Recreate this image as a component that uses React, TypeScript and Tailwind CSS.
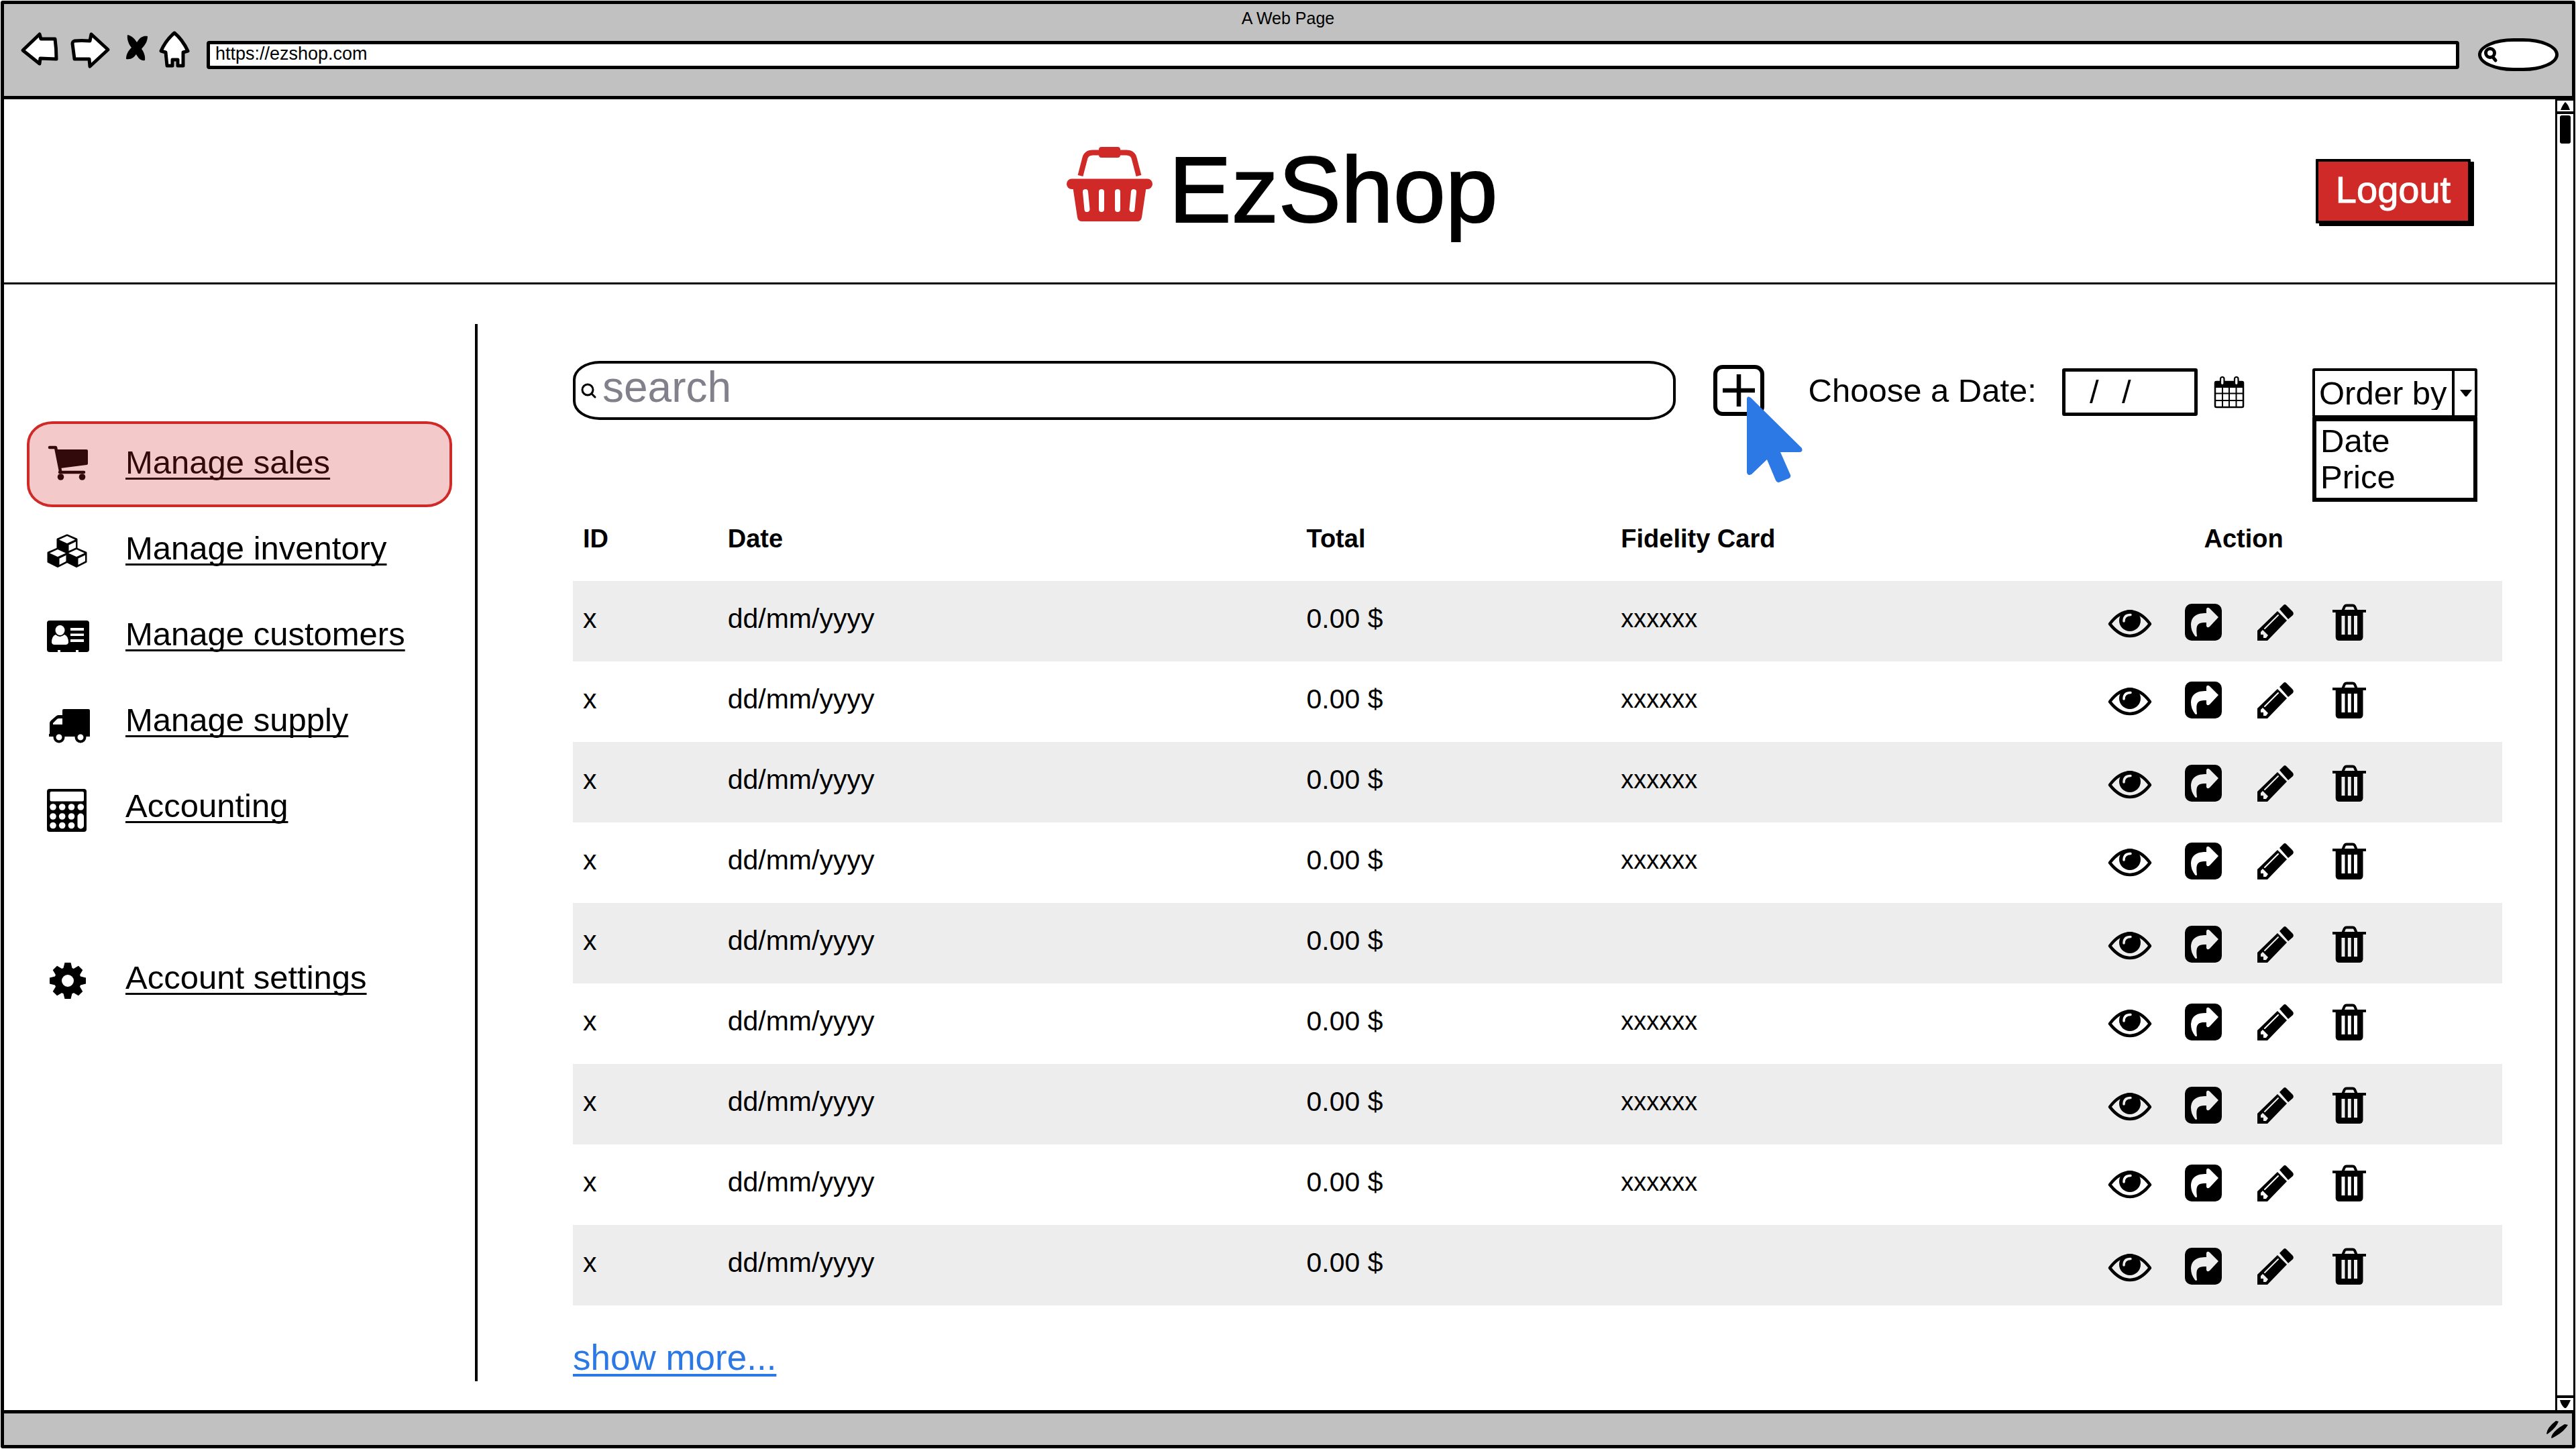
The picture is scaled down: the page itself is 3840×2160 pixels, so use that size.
import type { ReactNode } from "react";

const svgBase = "block overflow-visible";

/* ---------- browser chrome ---------- */

function BackIcon() {
  return (
    <svg className={svgBase} width="62" height="58" viewBox="0 0 62 58" fill="white" stroke="black" strokeWidth="5" strokeLinejoin="round">
      <path d="M5 29L30 5L32 12L53 12Q55 26 55 42L31 41L30 49Z" />
    </svg>
  );
}

function ForwardIcon() {
  return (
    <svg className={svgBase} width="64" height="58" viewBox="0 0 64 58" fill="white" stroke="black" strokeWidth="5" strokeLinejoin="round">
      <path d="M8 15Q18 14 31 15L33 5L58 28L31 53L30 42L8 42Q7 34 5 19Q5 16 8 15Z" />
    </svg>
  );
}

function StopIcon() {
  return (
    <svg className={svgBase} width="46" height="58" viewBox="0 0 46 58">
      <path d="M11 6C17 7 22 12 25 17C30 9 35 7 41 8C41 17 36 22 32 27C35 31 38 37 37 44C30 45 27 40 24 35C20 40 17 43 9 42C9 34 13 29 17 25C13 20 10 13 11 6Z" />
    </svg>
  );
}

function HomeIcon() {
  return (
    <svg className={svgBase} width="46" height="58" viewBox="0 0 46 58" fill="white" stroke="black" strokeWidth="5" strokeLinejoin="round">
      <path d="M23 3Q35 13 43 30L36 32V52H28V43H20V52H12L10 32L3 30Q10 14 23 3Z" />
    </svg>
  );
}

function BrowserBar() {
  return (
    <header className="border-b-[5px] border-black bg-[#c1c1c1] pt-[9px] pb-[37px]">
      <p className="text-center text-[25px] leading-6">A Web Page</p>
      <div className="mt-[7px] flex h-[60px] items-end pr-5 pl-[23px]">
        <nav aria-label="Browser" className="flex gap-3 self-start">
          <button type="button" aria-label="Back"><BackIcon /></button>
          <button type="button" aria-label="Forward"><ForwardIcon /></button>
          <button type="button" aria-label="Stop"><StopIcon /></button>
          <button type="button" aria-label="Home"><HomeIcon /></button>
        </nav>
        <input
          aria-label="Address"
          defaultValue="https://ezshop.com"
          className="mb-[3px] ml-[25px] h-[42px] min-w-0 flex-1 rounded-[4px] border-[5px] border-black bg-white pb-1 pl-2 text-[27px] leading-7 outline-none"
        />
        <div className="ml-7 flex h-[49px] w-[120px] items-center rounded-[44%/50%] border-[5px] border-black bg-white pl-1">
          <svg className={svgBase} width="20" height="24" viewBox="0 0 20 24" fill="none" stroke="black" strokeWidth="5" strokeLinecap="round">
            <circle cx="9" cy="9" r="6.5" />
            <path d="M13 15L17 20" />
          </svg>
          <input aria-label="Web search" className="w-full min-w-0 bg-transparent outline-none" />
        </div>
      </div>
    </header>
  );
}

function ScrollBar() {
  return (
    <div className="z-10 -mr-[5px] flex w-[30px] shrink-0 flex-col items-center border-x-[3px] border-black bg-white">
      <button type="button" aria-label="Scroll up" className="flex h-[22px] w-full items-center justify-center border-t-2 border-b-[4px] border-black">
        <svg width="16" height="12" viewBox="0 0 16 12"><path d="M1 12Q4 4 8 0Q12 3 15 12Z" /></svg>
      </button>
      <div className="mt-[2px] h-[42px] w-4 rounded-[3px] bg-black" />
      <div className="flex-1" />
      <button type="button" aria-label="Scroll down" className="flex h-[22px] w-full items-center justify-center border-t-[4px] border-black">
        <svg width="16" height="12" viewBox="0 0 16 12"><path d="M0 0H16Q12 9 9 12H7Q2 8 0 0Z" /></svg>
      </button>
    </div>
  );
}

function StatusBar() {
  return (
    <footer className="flex h-[52px] items-center justify-end border-t-[5px] border-black bg-[#c1c1c1] pr-[5px]">
      <svg className={svgBase} width="34" height="28" viewBox="0 0 34 28">
        <path d="M1 20Q2 11 15 1L19 2Q15 12 2 21Z" />
        <path d="M8 26Q9 17 28 6L33 7Q27 18 9 27Z" />
      </svg>
    </footer>
  );
}

/* ---------- page header ---------- */

function BasketLogo() {
  return (
    <svg className={svgBase} width="128" height="112" viewBox="0 0 128 112" fill="#d02a28">
      <path d="M20.5 43L27 18Q29 8.500 39 8.500H89Q99 8.500 101 18L107.500 43" fill="none" stroke="#d02a28" strokeWidth="8" />
      <rect x="48" y="0" width="32" height="16" rx="4" />
      <rect x="0" y="47.500" width="128" height="15.500" rx="7.500" />
      <path d="M9 58H119L112 105Q111 111 105 111H23Q17 111 16 105Z" />
      <path d="M28 67L30.500 93M52 67V93M76 67V93M100 67L97.500 93" stroke="white" strokeWidth="8" strokeLinecap="round" />
    </svg>
  );
}

function PageHeader() {
  return (
    <div className="grid h-[276px] grid-cols-[1fr_auto_1fr] items-center border-b-[3px] border-black">
      <h1 className="col-start-2 flex items-center gap-6 pb-1 pl-2">
        <span className="pb-4"><BasketLogo /></span>
        <span className="text-[140px] leading-none [-webkit-text-stroke:2px_black]">EzShop</span>
      </h1>
      <button
        type="button"
        className="mr-[126px] h-24 w-[231px] justify-self-end rounded-[1px] border-[4px] border-black bg-[#d02a28] pb-1 text-[56px] leading-none text-white shadow-[5px_4px_0_0_black] [-webkit-text-stroke:1px_white]"
      >
        Logout
      </button>
    </div>
  );
}

/* ---------- sidebar ---------- */

function NavGlyph({ children }: { children: ReactNode }) {
  return (
    <svg className="block shrink-0 overflow-visible" width="64" height="64" viewBox="0 0 64 64" fill="currentColor">
      {children}
    </svg>
  );
}

function CartIcon() {
  return (
    <NavGlyph>
      <path d="M5 7H14L21 42" fill="none" stroke="currentColor" strokeWidth="4.500" strokeLinecap="round" strokeLinejoin="round" />
      <path d="M13 10H60Q62 10 62 12V31Q62 33 60 33L21 38Z" />
      <path d="M20 44H56" stroke="currentColor" strokeWidth="4.500" strokeLinecap="round" />
      <circle cx="21.500" cy="51" r="4.800" />
      <circle cx="53.500" cy="51" r="4.800" />
    </NavGlyph>
  );
}

function CubesIcon() {
  return (
    <NavGlyph>
      {["translate(31 10)", "translate(17 30)", "translate(45 30)"].map((t) => (
        <g key={t} transform={t}>
          <path d="M0 0L14 6V19.500L0 26.500L-14 19.500V6Z" stroke="currentColor" strokeWidth="3" strokeLinejoin="round" />
          <path d="M0 1L12 6.500L0 12L-12 6.500Z" fill="white" />
          <path d="M2.500 14.500L13 9.500V18.500L2.500 24Z" fill="white" />
        </g>
      ))}
    </NavGlyph>
  );
}

function IdCardIcon() {
  return (
    <NavGlyph>
      <rect x="1" y="9" width="63" height="47" rx="4" />
      <g fill="white">
        <path d="M8 42Q8 32 14 30Q20 36 27 30Q33 32 33 42Q32 45 29 45H12Q9 45 8 42Z" />
        <ellipse cx="20.500" cy="23.500" rx="7" ry="7.500" />
        <path d="M36 20H56V24H36ZM36 28.500H56V32H36ZM36 37H56V41H36ZM17 53H21V57H17ZM44 53H48V57H44Z" />
      </g>
    </NavGlyph>
  );
}

function TruckIcon() {
  return (
    <NavGlyph>
      <path d="M24 15Q24 13 26 13H63Q65 13 65 15V54H4V50H5V34Q5 32 7 30L14 24Q16 22 18 22H24Z" />
      <path d="M10 36V34L16 28Q17 27 19 27H24V36Z" fill="white" />
      <circle cx="19" cy="55" r="6.500" fill="white" stroke="currentColor" strokeWidth="4" />
      <circle cx="51" cy="55" r="6.500" fill="white" stroke="currentColor" strokeWidth="4" />
    </NavGlyph>
  );
}

function CalculatorIcon() {
  return (
    <NavGlyph>
      <rect x="1" y="4" width="59" height="64" rx="4" />
      <g fill="white">
        <rect x="5.500" y="8" width="50.500" height="14.500" rx="2" />
        {[31, 45, 58.5].map((y) =>
          [10, 23.7, 37.5].map((x) => <circle key={`${x}-${y}`} cx={x} cy={y} r="4.800" />),
        )}
        <circle cx="51.300" cy="31" r="4.800" />
        <rect x="46.500" y="40.500" width="9.500" height="23" rx="4.700" />
      </g>
    </NavGlyph>
  );
}

function GearIcon() {
  return (
    <NavGlyph>
      <circle cx="32" cy="34" r="14.500" fill="none" stroke="currentColor" strokeWidth="11" />
      {["rotate(0 32 34)", "rotate(45 32 34)", "rotate(90 32 34)", "rotate(135 32 34)", "rotate(180 32 34)", "rotate(225 32 34)", "rotate(270 32 34)", "rotate(315 32 34)"].map((t) => (
        <path key={t} transform={t} d="M25 17L27.500 7H36.500L39 17Z" />
      ))}
    </NavGlyph>
  );
}

type NavItem = { label: string; icon: ReactNode; active?: boolean };

const mainNav: NavItem[] = [
  { label: "Manage sales", icon: <CartIcon />, active: true },
  { label: "Manage inventory", icon: <CubesIcon /> },
  { label: "Manage customers", icon: <IdCardIcon /> },
  { label: "Manage supply", icon: <TruckIcon /> },
  { label: "Accounting", icon: <CalculatorIcon /> },
];

function NavLink({ label, icon, active }: NavItem) {
  return (
    <a
      href="#"
      aria-current={active ? "page" : undefined}
      className={
        "flex h-32 items-center gap-[54px] rounded-[38px/34px] border-[4px] pl-[25px] " +
        (active ? "border-[#d02a28] bg-[#f3c9ca] text-[#320a0b]" : "border-transparent")
      }
    >
      {icon}
      <span className="pb-1.5 text-[49px] leading-none underline decoration-[3px] underline-offset-[6px] [text-decoration-skip-ink:none]">
        {label}
      </span>
    </a>
  );
}

function Sidebar() {
  return (
    <aside className="mt-[59px] mb-[43px] w-[706px] shrink-0 border-r-[4px] border-black px-[34px] pt-[145px]">
      <nav aria-label="Main" className="flex flex-col">
        {mainNav.map((item) => (
          <NavLink key={item.label} {...item} />
        ))}
        <div className="mt-32">
          <NavLink label="Account settings" icon={<GearIcon />} />
        </div>
      </nav>
    </aside>
  );
}

/* ---------- toolbar ---------- */

function CursorIcon() {
  return (
    <svg className="pointer-events-none absolute top-[45px] left-[46px] overflow-visible" width="90" height="132" viewBox="0 0 90 132" fill="#2c78e5">
      <path d="M4 5Q5 0 10 4L86 79Q88 85 82 85H54L69 119Q70 122 67 124L52 130Q49 131 47 127L34 96L11 118Q5 121 4 115Z" />
    </svg>
  );
}

function CalendarIcon() {
  return (
    <svg className={svgBase} width="46" height="50" viewBox="0 0 46 50">
      <rect x="2" y="10" width="42" height="38" rx="2" fill="white" stroke="black" strokeWidth="2.500" />
      <path d="M2 9H44V19H2Z" />
      <path d="M13 18V47M23 18V47M33.500 18V47M2 27.500H44M2 38H44" stroke="black" strokeWidth="2" />
      <rect x="10" y="3" width="5.500" height="12" rx="2.700" fill="white" stroke="black" strokeWidth="2.200" />
      <rect x="31" y="3" width="5.500" height="12" rx="2.700" fill="white" stroke="black" strokeWidth="2.200" />
    </svg>
  );
}

function Toolbar() {
  return (
    <div className="flex items-center pr-[37px]">
      <label className="flex h-[88px] min-w-0 flex-1 items-center rounded-[40px/28px] border-[4px] border-black pl-2">
        <svg className={svgBase} width="24" height="24" viewBox="0 0 24 24" fill="none" stroke="black" strokeWidth="3" strokeLinecap="round">
          <circle cx="10" cy="11" r="8" />
          <path d="M16 17L21 22" />
        </svg>
        <input
          type="search"
          aria-label="Search sales"
          placeholder="search"
          className="ml-2 w-full min-w-0 bg-transparent pb-2.5 text-[64px] leading-none outline-none placeholder:text-[#82808b]"
        />
      </label>

      <div className="relative ml-14">
        <button type="button" aria-label="Add sale" className="flex size-[76px] items-center justify-center rounded-[14px] border-[6px] border-black">
          <svg width="48" height="48" viewBox="0 0 48 48" stroke="black" strokeWidth="6.500" strokeLinecap="square">
            <path d="M24 3V45M3 24H45" />
          </svg>
        </button>
        <CursorIcon />
      </div>

      <label htmlFor="sale-date" className="ml-[66px] text-[49px] leading-none whitespace-nowrap">Choose a Date:</label>
      <input
        id="sale-date"
        defaultValue={"/\u2002\u2009/"}
        className="mt-1 ml-[38px] h-[71px] w-[202px] rounded-[3px] border-[5px] border-black pl-9 text-[49px] leading-none outline-none"
      />
      <button type="button" aria-label="Open calendar" className="mt-1 ml-6"><CalendarIcon /></button>

      <div className="relative mt-2 ml-[101px] w-[246px]">
        <select aria-label="Order by" className="block h-[74px] w-full appearance-none rounded-[3px] border-[4px] border-black bg-white pl-1.5 text-[49px] leading-none outline-none">
          <option>Order by</option>
        </select>
        <span className="pointer-events-none absolute inset-y-0 right-0 flex w-[38px] items-center justify-center border-l-[4px] border-black">
          <svg width="18" height="10" viewBox="0 0 18 10"><path d="M0 0H18L10 10H8Z" /></svg>
        </span>
        <ul role="listbox" aria-label="Order options" className="absolute inset-x-0 top-[73px] border-[6px] border-black bg-white pt-0.5 pb-1 pl-1.5 text-[49px] leading-[54px]">
          <li role="option" aria-selected="false">Date</li>
          <li role="option" aria-selected="false">Price</li>
        </ul>
      </div>
    </div>
  );
}

/* ---------- sales table ---------- */

const cutFill = "fill-white group-odd:fill-[#ededed]";
const cutStroke = "stroke-white group-odd:stroke-[#ededed]";

function EyeIcon() {
  return (
    <svg className={svgBase} width="64" height="56" viewBox="0 0 64 56" fill="none">
      <path d="M2 30Q16 11.500 32 11.500Q48 11.500 62 30Q48 48 32 48Q16 48 2 30Z" stroke="black" strokeWidth="4.500" strokeLinejoin="round" />
      <circle cx="32" cy="25" r="16" fill="black" />
      <path className={cutStroke} d="M23 26Q23 16.500 33 16.500" strokeWidth="3.500" strokeLinecap="round" />
    </svg>
  );
}

function ShareIcon() {
  return (
    <svg className={svgBase} width="58" height="56" viewBox="0 0 58 56">
      <rect width="55" height="55" rx="10" />
      <path className={cutFill} d="M32 14V8Q33 4 37 7L50 20L37 34Q33 37 32 33V28C18 27 16 32 18 48Q17 50 15 48C11 43 9 37 9 31C10 18 18 14 32 14Z" />
    </svg>
  );
}

function PencilIcon() {
  return (
    <svg className={svgBase} width="58" height="56" viewBox="0 0 58 56">
      <path d="M33 8L39 2Q41 0 43 2L52 11Q55 14 53 17L46 23Z" />
      <path d="M30 11L44 25L15 55H0V40Z" />
      <path className={cutStroke} d="M11 37L31 17" strokeWidth="2" strokeLinecap="round" />
      <path className={cutFill} d="M5 42L8 39L16 47L13 51H9V46H5Z" />
    </svg>
  );
}

function TrashIcon() {
  return (
    <svg className={svgBase} width="54" height="56" viewBox="-4 0 54 56">
      <path d="M15 11L18 4Q19 2.500 21 2.500H30Q32 2.500 33 4L36 11" fill="none" stroke="black" strokeWidth="4" />
      <path d="M0 9H50V13H45.500V50Q45 55 40 55H10Q5 55 4.700 50V13H0Z" />
      <path className={cutFill} d="M13.500 18H18.500V46H13.500ZM22.800 18H27.800V46H22.800ZM32 18H37V46H32Z" />
    </svg>
  );
}

const rows = [true, true, true, true, false, true, true, true, false].map((hasCard) => ({
  id: "x",
  date: "dd/mm/yyyy",
  total: "0.00 $",
  card: hasCard ? "xxxxxx" : "",
}));

function SalesTable() {
  return (
    <table className="mt-[120px] w-full table-fixed border-collapse text-left">
      <colgroup>
        <col className="w-[7.5%]" />
        <col className="w-[30%]" />
        <col className="w-[16.3%]" />
        <col />
        <col className="w-[26.8%]" />
      </colgroup>
      <thead>
        <tr className="h-[120px] text-[38px] leading-none">
          <th className="px-[15px] pb-1.5">ID</th>
          <th className="px-[15px] pb-1.5">Date</th>
          <th className="px-[15px] pb-1.5">Total</th>
          <th className="px-[15px] pb-1.5">Fidelity Card</th>
          <th className="pb-1.5 text-center">Action</th>
        </tr>
      </thead>
      <tbody>
        {rows.map((row, i) => (
          <tr key={i} className="group h-[120px] text-[41px] leading-none odd:bg-[#ededed]">
            <td className="px-[15px] pb-2">{row.id}</td>
            <td className="px-[15px] pb-2">{row.date}</td>
            <td className="px-[15px] pb-2">{row.total}</td>
            <td className="px-[15px] pb-2 text-[38px]">{row.card}</td>
            <td className="group-odd:pt-1 group-even:pb-1">
              <div className="flex justify-center gap-[50px] pr-5">
                <button type="button" aria-label="View"><EyeIcon /></button>
                <button type="button" aria-label="Share"><ShareIcon /></button>
                <button type="button" aria-label="Edit"><PencilIcon /></button>
                <button type="button" aria-label="Delete"><TrashIcon /></button>
              </div>
            </td>
          </tr>
        ))}
      </tbody>
    </table>
  );
}

export default function App() {
  return (
    <div className="flex min-h-screen flex-col bg-white p-px font-['Liberation_Sans',Arial,sans-serif] text-black">
      <div className="flex flex-1 flex-col rounded-[3px] border-[5px] border-black">
        <BrowserBar />
        <div className="flex flex-1">
          <div className="flex min-w-0 flex-1 flex-col">
            <PageHeader />
            <div className="flex flex-1">
              <Sidebar />
              <main className="min-w-0 flex-1 pt-[114px] pr-[79px] pl-[142px]">
                <Toolbar />
                <SalesTable />
                <a href="#" className="mt-[51px] inline-block text-[53px] leading-none text-[#2c78e5] underline decoration-[4px] underline-offset-[6px] [text-decoration-skip-ink:none]">
                  show more...
                </a>
              </main>
            </div>
          </div>
          <ScrollBar />
        </div>
        <StatusBar />
      </div>
    </div>
  );
}
